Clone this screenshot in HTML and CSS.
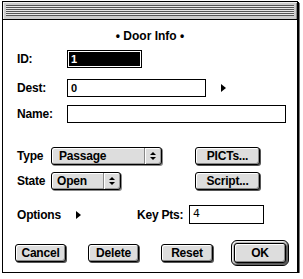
FILE: index.html
```html
<!DOCTYPE html>
<html lang="en">
<head>
    <meta charset="UTF-8">
    <title>Door Info</title>
    <link rel="stylesheet" href="styles.css">
</head>
<body>
    <div class="window">
        <div class="titlebar"><div class="stripes"></div></div>
        <div class="content">
            <div class="heading">&bull; Door Info &bull;</div>

            <div class="row row-id">
                <span class="label">ID:</span>
                <div class="field field-id"><span class="selected">1</span></div>
            </div>
            <div class="row row-dest">
                <span class="label">Dest:</span>
                <div class="field field-dest">0</div>
                <span class="disclosure"></span>
            </div>
            <div class="row row-name">
                <span class="label">Name:</span>
                <div class="field field-name"></div>
            </div>

            <div class="row row-type">
                <span class="label short">Type</span>
                <div class="popup popup-type"><span class="popup-text">Passage</span><span class="popup-arrows"></span></div>
                <button class="btn btn-side">PICTs...</button>
            </div>
            <div class="row row-state">
                <span class="label short">State</span>
                <div class="popup popup-state"><span class="popup-text">Open</span><span class="popup-arrows"></span></div>
                <button class="btn btn-side">Script...</button>
            </div>

            <div class="row row-options">
                <span class="label">Options</span>
                <span class="disclosure"></span>
                <span class="label keypts">Key Pts:</span>
                <div class="field field-keys">4</div>
            </div>

            <div class="row row-buttons">
                <button class="btn btn-bottom">Cancel</button>
                <button class="btn btn-bottom">Delete</button>
                <button class="btn btn-bottom">Reset</button>
                <div class="default-ring"><button class="btn btn-ok">OK</button></div>
            </div>
        </div>
    </div>
</body>
</html>
```

FILE: styles.css
```css
body {
    margin: 0;
    padding: 1px 0 0 2px;
    background: #fff;
    font-family: 'Liberation Sans', Arial, sans-serif;
    font-size: 12px;
    font-weight: bold;
    color: #000;
}
.window {
    width: 296px;
    height: 272px;
    border: 1px solid #000;
    box-shadow: 1px 1px 0 #000, 2px 2px 0 #777;
    display: flex;
    flex-direction: column;
    box-sizing: border-box;
}
.titlebar {
    height: 18px;
    background: #ccc;
    border-bottom: 1px solid #000;
    box-shadow: inset 1px 1px 0 #eee, inset -1px 0 0 #888;
    padding: 3px 3px 0 3px;
    box-sizing: border-box;
}
.stripes {
    height: 11px;
    background: repeating-linear-gradient(to bottom, #555 0, #555 1px, #e8e8e8 1px, #e8e8e8 2px);
}
.content {
    padding: 9px 0 0 14px;
    flex: 1;
}
.heading {
    text-align: center;
    line-height: 14px;
    height: 14px;
    margin-right: 14px;
}
.row {
    display: flex;
    align-items: center;
}
.label {
    width: 50px;
    flex: none;
    letter-spacing: -0.2px;
}
.label.short {
    width: 34px;
}
.field {
    border: 1px solid #000;
    height: 18px;
    box-sizing: border-box;
    padding: 0 0 0 3px;
    line-height: 16px;
    font-size: 11px;
}
.row-id { margin-top: 7px; }
.field-id {
    width: 75px;
    padding: 1px;
}
.selected {
    display: block;
    height: 14px;
    background: #000;
    color: #fff;
    line-height: 14px;
    padding-left: 2px;
}
.row-dest { margin-top: 11px; }
.field-dest { width: 139px; }
.disclosure {
    width: 0;
    height: 0;
    border-top: 4px solid transparent;
    border-bottom: 4px solid transparent;
    border-left: 5px solid #000;
    margin-left: 15px;
}
.row-name { margin-top: 8px; }
.field-name { width: 219px; }

.popup {
    display: flex;
    align-items: center;
    height: 18px;
    box-sizing: border-box;
    border: 1px solid #000;
    border-radius: 3px;
    background: #ddd;
    box-shadow: inset 1px 1px 0 #fff, inset -1px -1px 0 #999, 1px 1px 0 #888;
}
.popup-text {
    flex: 1;
    padding-left: 7px;
    letter-spacing: -0.2px;
}
.popup-arrows {
    width: 16px;
    height: 16px;
    border-left: 1px solid #888;
    box-shadow: inset 1px 0 0 #fff;
    position: relative;
}
.popup-arrows::before,
.popup-arrows::after {
    content: '';
    position: absolute;
    left: 5px;
    border-left: 3px solid transparent;
    border-right: 3px solid transparent;
}
.popup-arrows::before {
    top: 4px;
    border-bottom: 3px solid #000;
}
.popup-arrows::after {
    top: 9px;
    border-top: 3px solid #000;
}
.row-type { margin-top: 24px; }
.popup-type { width: 111px; }
.row-state { margin-top: 7px; }
.popup-state { width: 70px; }
.popup-state .popup-text { padding-left: 5px; }

.btn {
    font-family: inherit;
    font-size: 12px;
    font-weight: bold;
    color: #000;
    height: 18px;
    padding: 0;
    border: 1px solid #000;
    border-radius: 3px;
    background: #ddd;
    box-shadow: inset 1px 1px 0 #fff, inset -1px -1px 0 #888, 1px 1px 0 #555;
    letter-spacing: -0.2px;
}
.btn-side {
    width: 65px;
    margin-left: auto;
    margin-right: 36px;
}
.popup-type + .btn-side { margin-left: 33px; }
.popup-state + .btn-side { margin-left: 74px; }

.row-options {
    margin-top: 15px;
    height: 19px;
}
.row-options .label { width: auto; }
.row-options .disclosure { margin-left: 15px; }
.keypts {
    margin-left: 56px;
    width: 52px !important;
}
.field-keys {
    width: 75px;
    height: 19px;
    font-weight: normal;
    font-size: 11px;
    font-family: 'DejaVu Sans', sans-serif;
}

.row-buttons {
    margin-top: 16px;
    margin-left: -2px;
}
.btn-bottom {
    width: 51px;
    margin-right: 22px;
}
.btn-bottom:nth-child(3) {
    width: 52px;
    margin-right: 18px;
}
.default-ring {
    width: 58px;
    height: 26px;
    box-sizing: border-box;
    border: 1px solid #000;
    border-radius: 6px;
    padding: 2px;
    background: #bbb;
    box-shadow: inset 1px 1px 0 #eee, inset -1px -1px 0 #666;
}
.btn-ok {
    width: 100%;
    height: 20px;
    display: block;
}
```
